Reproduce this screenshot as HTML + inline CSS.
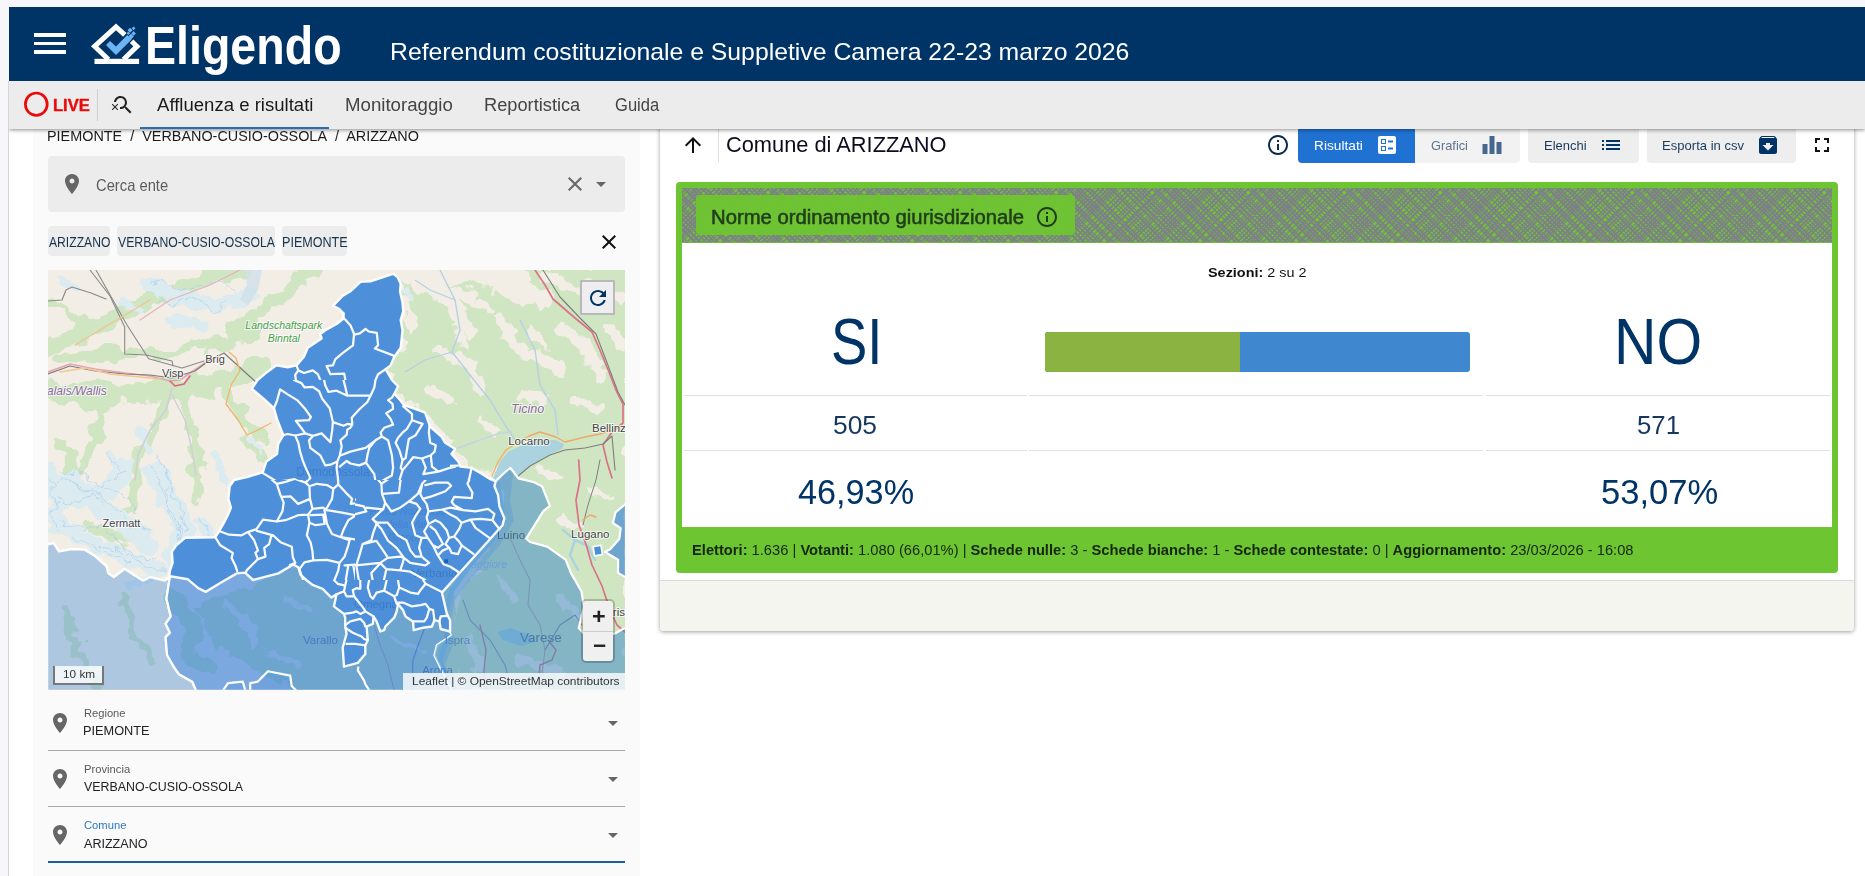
<!DOCTYPE html>
<html lang="it">
<head>
<meta charset="utf-8">
<title>Eligendo - Referendum costituzionale e Suppletive Camera 22-23 marzo 2026</title>
<style>
html,body{margin:0;padding:0;}
body{background:#f7f7f9;width:1865px;height:876px;overflow:hidden;font-family:"Liberation Sans",Arial,sans-serif;}
#root{position:absolute;left:0;top:0;width:1865px;height:876px;overflow:hidden;}
.abs{position:absolute;}
.t{position:absolute;white-space:nowrap;line-height:1em;transform-origin:0 0;display:inline-block;}
.t b{font-weight:700;}
#app{left:9px;top:7px;width:1856px;height:869px;background:#fff;}
#header{left:9px;top:7px;width:1856px;height:73.600px;background:#003366;}
#subnav{left:9px;top:80px;width:1856px;height:49px;background:#ececec;box-shadow:0 1px 4px rgba(0,0,0,.45);clip-path:inset(0 0 -10px 0);}
#leftpanel{left:33px;top:129px;width:607px;height:747px;background:#fafafa;}
#card{left:660px;top:120px;width:1194px;height:511px;background:#fff;box-shadow:0 1px 4px rgba(0,0,0,.38);border-radius:0 0 4px 4px;}
#cardfoot{left:660px;top:580px;width:1194px;height:51px;background:#f5f5f0;border-top:1px solid #dcdcdc;box-sizing:border-box;border-radius:0 0 4px 4px;}
.btn{position:absolute;top:120px;height:42.5px;background:#eeeeee;border-radius:0 0 4px 4px;}
svg{position:absolute;overflow:visible;}
</style>
</head>
<body>
<div id="root">
<div class="abs" id="app"></div>
<div class="abs" id="leftpanel"></div>
<div class="abs" style="left:8px;top:80.600px;width:1px;height:796px;background:#d4d4d6"></div>

<!-- right card -->
<div class="abs" id="card"></div>
<div class="abs" id="cardfoot"></div>

<!-- toolbar (under subnav shadow) -->
<svg style="left:681px;top:132.900px" width="24" height="24" viewBox="0 0 24 24"><path fill="#111" d="M4 12l1.41 1.41L11 7.83V20h2V7.83l5.58 5.59L20 12l-8-8-8 8z"/></svg>
<div class="abs" style="left:718px;top:129px;width:1px;height:33px;background:#dedede"></div>
<svg style="left:1265.8px;top:133px" width="24" height="24" viewBox="0 0 24 24"><path fill="#0b2b4d" d="M11 7h2v2h-2zm0 4h2v6h-2zm1-9C6.48 2 2 6.48 2 12s4.48 10 10 10 10-4.48 10-10S17.52 2 12 2zm0 18c-4.41 0-8-3.59-8-8s3.59-8 8-8 8 3.59 8 8-3.59 8-8 8z"/></svg>
<div class="btn" style="left:1298px;width:117px;background:#1f72d2;border-radius:0 0 0 4px"></div>
<div class="btn" style="left:1415px;width:105px;background:#f2f2f2;border-radius:0 0 4px 0"></div>
<div class="btn" style="left:1528px;width:111px;"></div>
<div class="btn" style="left:1647px;width:149px;"></div>
<!-- ballot icon -->
<svg style="left:1375px;top:133px" width="24" height="24" viewBox="0 0 24 24"><path fill="#fff" fill-rule="evenodd" d="M13 9.5h5v-2h-5v2zm0 7h5v-2h-5v2zm6 4.500H5c-1.100 0-2-.9-2-2V5c0-1.100.9-2 2-2h14c1.100 0 2 .9 2 2v14c0 1.100-.9 2-2 2zM6 11h5V6H6v5zm1-4h3v3H7V7zM6 18h5v-5H6v5zm1-4h3v3H7v-3z"/></svg>
<!-- bar chart icon -->
<svg style="left:1480px;top:133px" width="24" height="24" viewBox="0 0 24 24"><path fill="#46688f" d="M9.500 21h5V3h-5v18zM2.500 21h5V11h-5v10zM16.500 9v12h5V9h-5z"/></svg>
<!-- list icon -->
<svg style="left:1598.800px;top:133px" width="24" height="24" viewBox="0 0 24 24"><path fill="#003366" d="M3 13h2v-2H3v2zm0 4h2v-2H3v2zm0-8h2V7H3v2zm4 4h14v-2H7v2zm0 4h14v-2H7v2zM7 7v2h14V7H7z"/></svg>
<!-- archive icon -->
<svg style="left:1756.400px;top:133px" width="24" height="24" viewBox="0 0 24 24"><path fill="#003366" d="M20.540 5.230l-1.390-1.680C18.880 3.210 18.470 3 18 3H6c-.47 0-.88.210-1.160.55L3.460 5.230C3.170 5.570 3 6.020 3 6.500V19c0 1.100.9 2 2 2h14c1.100 0 2-.9 2-2V6.500c0-.48-.17-.93-.46-1.270zM12 17.500L6.500 12H10v-2h4v2h3.500L12 17.500zM5.120 5l.81-1h12l.94 1H5.120z"/></svg>
<!-- fullscreen icon -->
<svg style="left:1809.500px;top:133px" width="24" height="24" viewBox="0 0 24 24"><path fill="#111" d="M7 14H5v5h5v-2H7v-3zm-2-4h2V7h3V5H5v5zm12 7h-3v2h5v-5h-2v3zM14 5v2h3v3h2V5h-5z"/></svg>
<span class="t" id="crumb" style="left:47.07px;top:127.88px;font-size:15.5px;color:#1c1c1c;font-weight:400;transform:scaleX(0.9288);">PIEMONTE&nbsp; /&nbsp; VERBANO-CUSIO-OSSOLA&nbsp; /&nbsp; ARIZZANO</span>
<span class="t" id="comune" style="left:726.49px;top:134.50px;font-size:21.5px;color:#0c0c1e;font-weight:400;transform:scaleX(1.0142);">Comune di ARIZZANO</span>
<span class="t" id="b1" style="left:1313.68px;top:138.65px;font-size:13.4px;color:#fff;font-weight:400;transform:scaleX(1.0243);">Risultati</span>
<span class="t" id="b2" style="left:1431.00px;top:138.65px;font-size:13.4px;color:#5c7590;font-weight:400;transform:scaleX(0.9554);">Grafici</span>
<span class="t" id="b3" style="left:1543.63px;top:138.65px;font-size:13.4px;color:#17395e;font-weight:400;transform:scaleX(0.9686);">Elenchi</span>
<span class="t" id="b4" style="left:1662.02px;top:138.65px;font-size:13.4px;color:#17395e;font-weight:400;transform:scaleX(0.9759);">Esporta in csv</span>

<!-- header + subnav -->
<div class="abs" id="subnav"></div>
<div class="abs" id="header"></div>
<!-- hamburger -->
<div class="abs" style="left:34.300px;top:33px;width:31.500px;height:3.500px;background:#fff"></div>
<div class="abs" style="left:34.300px;top:41.600px;width:31.500px;height:3.500px;background:#fff"></div>
<div class="abs" style="left:34.300px;top:50.300px;width:31.500px;height:3.500px;background:#fff"></div>
<!-- logo -->
<svg style="left:88px;top:20px" width="56" height="48" viewBox="88 20 56 48">
  <path fill="none" stroke="#fff" stroke-width="5" stroke-linejoin="miter" d="M124.800 34.900 L116 26.900 L94.600 46.400 L108.500 59.500"/>
  <path fill="none" stroke="#fff" stroke-width="5" d="M131.600 41.200 L137 46.400 L123.500 59.500"/>
  <rect x="94.500" y="58.800" width="44.600" height="5.200" fill="#fff"/>
  <path fill="#6cb4f3" d="M106 45 L110 41 L116 46.600 L127.200 35 L131.600 39.400 L116 55 Z"/>
  <g fill="#6cb4f3">
   <rect x="-1.800" y="-1.800" width="3.600" height="3.600" transform="translate(130.100 30.200) rotate(45)"/>
   <rect x="-1.300" y="-1.300" width="2.600" height="2.600" transform="translate(133.600 28.300) rotate(45)"/>
   <rect x="-1.600" y="-1.600" width="3.200" height="3.200" transform="translate(133.600 33.500) rotate(45)"/>
   <rect x="-2" y="-2" width="4" height="4" transform="translate(131 36.600) rotate(45)"/>
   <rect x="-1.200" y="-1.200" width="2.400" height="2.400" transform="translate(128.300 33.200) rotate(45)"/>
  </g>
</svg>
<!-- live -->
<svg style="left:20px;top:88px" width="34" height="34" viewBox="20 88 34 34"><ellipse cx="36.300" cy="104.200" rx="10.900" ry="11.200" fill="none" stroke="#ea0a0a" stroke-width="2.700"/></svg>
<div class="abs" style="left:97px;top:89px;width:1px;height:32px;background:#cfcfcf"></div>
<!-- search_off -->
<svg style="left:110.500px;top:93px" width="24" height="24" viewBox="0 0 24 24"><path fill="#222" d="M15.500 14h-.79l-.28-.27C15.410 12.590 16 11.110 16 9.500 16 5.910 13.090 3 9.500 3 6.080 3 3.280 5.640 3.030 9h2.020C5.300 6.750 7.180 5 9.500 5 11.990 5 14 7.010 14 9.500S11.990 14 9.500 14c-.17 0-.33-.03-.5-.05v2.020c.17.020.33.030.5.030 1.610 0 3.090-.59 4.230-1.570l.27.280v.79l5 4.990L20.490 19l-4.990-5z M6.470 10.820L4 13.290l-2.470-2.470-.71.710L3.290 14 .82 16.470l.71.710L4 14.710l2.470 2.470.71-.71L4.710 14l2.470-2.470z"/></svg>
<div class="abs" style="left:140px;top:127px;width:189px;height:2px;background:#2a6db5"></div>

<!-- left panel content -->
<div class="abs" style="left:48px;top:156.250px;width:577px;height:55.500px;background:#ececec;border-radius:4px"></div>
<svg style="left:60px;top:172.300px" width="24" height="24" viewBox="0 0 24 24"><path fill="#666" d="M12 2C8.130 2 5 5.130 5 9c0 5.250 7 13 7 13s7-7.750 7-13c0-3.870-3.130-7-7-7zm0 9.500c-1.380 0-2.500-1.120-2.500-2.500s1.120-2.500 2.500-2.500 2.500 1.120 2.500 2.500-1.120 2.500-2.500 2.500z"/></svg>
<svg style="left:563px;top:171.900px" width="24" height="24" viewBox="0 0 24 24"><path fill="#666" d="M19 6.410L17.590 5 12 10.590 6.410 5 5 6.410 10.590 12 5 17.590 6.410 19 12 13.410 17.590 19 19 17.590 13.410 12z"/></svg>
<svg style="left:589px;top:172px" width="24" height="24" viewBox="0 0 24 24"><path fill="#666" d="M7 10l5 5 5-5z"/></svg>
<div class="abs" style="left:48px;top:226.250px;width:62px;height:29.500px;background:#ececec;border-radius:4px"></div>
<div class="abs" style="left:117px;top:226.250px;width:158px;height:29.500px;background:#ececec;border-radius:4px"></div>
<div class="abs" style="left:282px;top:226.250px;width:65px;height:29.500px;background:#ececec;border-radius:4px"></div>
<svg style="left:596.500px;top:230.200px" width="24" height="24" viewBox="0 0 24 24"><path fill="#111" d="M19 6.410L17.590 5 12 10.590 6.410 5 5 6.410 10.590 12 5 17.590 6.410 19 12 13.410 17.590 19 19 17.590 13.410 12z"/></svg>

<!-- map -->
<div class="abs" id="map" style="left:48px;top:270px;width:577px;height:419.700px;overflow:hidden;background:#f2efe9">
<svg style="left:0;top:0" width="577" height="419.7" viewBox="48 270 577 419.7">
<defs>
<filter id="rag" x="-5%" y="-5%" width="110%" height="110%"><feTurbulence type="fractalNoise" baseFrequency="0.045" numOctaves="3" seed="7" result="n"/><feDisplacementMap in="SourceGraphic" in2="n" scale="26" xChannelSelector="R" yChannelSelector="G"/><feGaussianBlur stdDeviation="0.7"/></filter>
<filter id="rag2" x="-5%" y="-5%" width="110%" height="110%"><feTurbulence type="fractalNoise" baseFrequency="0.09" numOctaves="2" seed="3" result="n"/><feDisplacementMap in="SourceGraphic" in2="n" scale="14" xChannelSelector="G" yChannelSelector="R"/><feGaussianBlur stdDeviation="0.5"/></filter>
<filter id="soft"><feGaussianBlur stdDeviation="1.2"/></filter>
<clipPath id="cm"><rect x="48" y="270" width="577" height="419.7"/></clipPath>
</defs>
<g clip-path="url(#cm)">
<rect x="48" y="270" width="577" height="420" fill="#f2eee6"/>
<g filter="url(#rag)" fill="#d0e5c1" stroke="#d0e5c1" stroke-linejoin="round" stroke-linecap="round">
<path d="M405 270 L625 270 L625 480 L520 480 L500 470 L470 462 L455 445 L440 430 L428 410 L405 400 L398 385 L395 370 L405 345 Z" stroke-width="6"/>
<path d="M520 470 L625 470 L625 640 L590 640 L580 600 L565 560 L545 545 L528 538 L545 512 L550 495 Z" stroke-width="4"/>
<path d="M500 480 L560 480 L600 560 L625 600 L625 690 L470 690 L455 660 L452 630 L460 600 L480 570 L505 530 Z" stroke-width="6"/>
<path d="M250 585 L300 570 L340 600 L345 690 L300 690 L250 660 L215 640 L200 610 Z" stroke-width="6"/>
<path d="M345 600 L450 590 L450 690 L345 690 Z" stroke-width="6"/>
<path fill="none" stroke-width="14" d="M175 600 L195 625 L190 650 L210 670"/>
<path fill="none" stroke-width="10" d="M60 610 L80 640 L85 670 L100 690"/>
<path fill="none" stroke-width="9" d="M120 600 L135 630 L150 660"/>
<path fill="none" stroke-width="16" d="M40 352 L100 325 L150 300 L200 280 L240 268"/>
<path fill="none" stroke-width="12" d="M230 330 L275 300 L320 272"/>
<path fill="none" stroke-width="20" d="M40 392 L90 396 L140 392 L190 388 L235 378 L262 366"/>
<path fill="none" stroke-width="12" d="M60 360 L120 352 L170 352 L215 345 L250 330"/>
<path fill="none" stroke-width="11" d="M172 385 L160 420 L140 450 L135 480 L130 510"/>
<path fill="none" stroke-width="10" d="M185 390 L192 430 L196 470 L200 500"/>
<path fill="none" stroke-width="10" d="M100 400 L95 440 L80 470 L70 500"/>
<path fill="none" stroke-width="10" d="M222 380 L235 410 L250 430 L268 442"/>
<path fill="none" stroke-width="9" d="M60 440 L70 470 L75 500"/>
<path fill="none" stroke-width="12" d="M95 530 L115 535 L128 540"/>
<path fill="none" stroke-width="8" d="M48 300 L70 310 L90 330"/>
<path fill="none" stroke-width="9" d="M245 440 L262 455 L268 470"/>
</g>
<g filter="url(#rag2)" fill="#f2eee6" stroke="#f2eee6" stroke-linecap="round" stroke-linejoin="round">
<path fill="none" stroke-width="14" d="M420 285 L450 300 L470 330"/>
<path fill="none" stroke-width="20" d="M405 272 L440 276 L480 272 L520 278"/>
<path fill="none" stroke-width="12" d="M440 290 L470 296"/>
<path fill="none" stroke-width="10" d="M500 292 L530 300"/>
<path fill="none" stroke-width="8" d="M455 325 L465 345"/>
<path fill="none" stroke-width="16" d="M470 275 L520 285 L545 300"/>
<path fill="none" stroke-width="13" d="M500 320 L520 350 L560 370"/>
<path fill="none" stroke-width="10" d="M440 350 L470 365 L480 390"/>
<path fill="none" stroke-width="12" d="M560 330 L585 345 L600 375"/>
<path fill="none" stroke-width="8" d="M430 390 L450 400"/>
<path fill="none" stroke-width="8" d="M520 395 L545 400"/>
<path fill="none" stroke-width="12" d="M590 285 L620 300"/>
<path fill="none" stroke-width="8" d="M575 400 L600 410"/>
<path fill="none" stroke-width="9" d="M610 330 L625 350"/>
<path fill="none" stroke-width="6" d="M480 420 L495 432"/>
<path fill="none" stroke-width="8" d="M405 300 L412 330"/>
<path fill="none" stroke-width="8" d="M545 275 L575 290"/>
<path fill="none" stroke-width="7" d="M470 300 L490 310"/>
<path fill="none" stroke-width="7" d="M530 330 L545 345"/>
<path fill="none" stroke-width="7" d="M540 470 L560 478"/>
<path fill="none" stroke-width="10" d="M470 640 L480 670"/>
<path fill="none" stroke-width="9" d="M225 605 L250 625 L255 645"/>
<path fill="none" stroke-width="7" d="M285 600 L310 610"/>
<path fill="none" stroke-width="7" d="M270 655 L300 665"/>
<path fill="none" stroke-width="6" d="M395 640 L420 650"/>
<path fill="none" stroke-width="10" d="M520 660 L560 672"/>
<path fill="none" stroke-width="8" d="M560 600 L580 615"/>
<path fill="none" stroke-width="7" d="M500 580 L515 600"/>
<path fill="none" stroke-width="6" d="M590 490 L610 498"/>
<path fill="none" stroke-width="6" d="M560 520 L580 528"/>
</g>
<g filter="url(#rag2)" fill="none" stroke="#dcebf0" stroke-linecap="round" stroke-linejoin="round">
<path stroke-width="16" d="M150 285 L185 300 L220 305 L250 295"/>
<path stroke-width="10" d="M170 320 L205 325"/>
<path stroke-width="18" d="M55 490 L80 500 L110 490 L125 470"/>
<path stroke-width="16" d="M60 525 L95 545 L130 560 L160 570"/>
<path stroke-width="22" d="M155 470 L170 500 L185 530 L175 555"/>
<path stroke-width="20" d="M70 480 L95 500 L120 520 L150 545"/>
<path stroke-width="14" d="M50 470 L60 500 L52 530"/>
<path stroke-width="8" d="M140 430 L150 450"/>
<path stroke-width="10" d="M200 520 L210 535"/>
<path stroke-width="9" d="M110 455 L122 470"/>
<path stroke-width="8" d="M215 455 L225 480"/>
<path stroke-width="8" d="M130 585 L160 575"/>
<path stroke-width="7" d="M120 300 L140 310"/>
<path stroke-width="8" d="M60 280 L80 290"/>
<path stroke-width="6" d="M250 440 L262 452"/>
<path stroke-width="6" d="M405 290 L412 300"/>
</g>
<g fill="none" stroke="#aacdf0" stroke-width="0.8" opacity=".85" filter="url(#rag2)">
<path d="M150 285 q10 -8 20 0 t20 4 t20 -6 t25 8"/>
<path d="M160 300 q12 8 24 0 t22 6 t20 -4"/>
<path d="M55 485 q10 -10 20 0 t18 6 t20 -12 t14 -10"/>
<path d="M58 500 q14 6 26 -2 t22 8"/>
<path d="M60 520 q15 10 30 8 t30 16 t36 14"/>
<path d="M150 465 q10 12 14 28 t14 30 t-8 30"/>
<path d="M165 470 q8 16 12 30 t8 30"/>
<path d="M70 535 q14 6 28 14 t30 12"/>
<path d="M60 470 q8 6 16 2 t14 8"/>
<path d="M175 520 q6 10 2 22"/>
<path d="M70 480 q12 10 26 14 t24 18 t28 20"/>
<path d="M80 470 q10 14 30 20 t26 22"/>
<path d="M50 480 q8 14 4 30 t6 22"/>
<path d="M158 455 q12 18 10 40 t10 36"/>
<path d="M100 545 q20 4 36 16 t30 10"/>
<path d="M195 515 q10 8 14 20"/>
<path d="M105 455 q10 8 16 16"/>
</g>
<path fill="#aad3df" d="M493 478 L500 462 L508 452 L520 446 L535 440 L555 440 L564 444 L562 449 L548 455 L532 465 L517 477 L509 468 L497 482 Z"/>
<path fill="none" stroke="#aad3df" stroke-width="5" d="M497 482 L500 500 L503 520 L492 540 L470 565 L452 590 L445 615 L447 640 L440 660 L450 690"/>
<path fill="none" stroke="#aad3df" stroke-width="2.5" stroke-linecap="round" d="M563 530 L575 540 L588 546 L595 560 M575 540 L570 555 L578 570"/>
<path fill="#aad3df" d="M497 632 l14 -4 l16 6 l8 8 l-14 4 l-18 -6 z"/>
<path fill="none" stroke="#b5d0e6" stroke-width="1.4" d="M440 270 L455 300 L460 330 L452 352 L470 375 L490 400 L505 425 L515 440"/>
<path fill="none" stroke="#b5d0e6" stroke-width="1.4" d="M520 320 L535 350 L540 385 L555 410 L558 435"/>
<path fill="none" stroke="#b5d0e6" stroke-width="1.2" d="M455 300 L430 290 L415 280 M452 352 L425 360 L405 372"/>
<path fill="none" stroke="#c5d5e0" stroke-width="1.6" d="M455 449 L480 440 L500 433 L512 432"/>
<path fill="#cfe0ea" stroke="none" d="M245 270 L262 270 L258 290 L248 305 L240 300 L247 285 Z" opacity=".8"/>
<g fill="none" stroke-linecap="round" stroke-linejoin="round">
<path stroke="#8a8a8a" stroke-width="1.2" d="M48 301 L62 300 L66 290 L72 287 L91 293 L106 299"/>
<path stroke="#8a8a8a" stroke-width="1.1" d="M90 270 L110 296 L124.700 327 L124.700 354 L146 355 L172 361 L173 366"/>
<path stroke="#8a8a8a" stroke-width="1.1" d="M96 270 L127 325 L148.700 358.700 L182 368 L204 361"/>
<path stroke="#e6a6b0" stroke-width="1.7" d="M48 372 L70 364 L95 369 L125 373 L150 376 L170 381 L180 380 L193 371 L205 363"/>
<path stroke="#7d7d7d" stroke-width="1.2" d="M48 374 L70 366 L95 371 L125 374 L150 375 L172 378 L195 371 L210 360 L224 353 L257 383 L275 398"/>
<path stroke="#d9667d" stroke-width="1.6" d="M170 381 L175 386 L184 384 L190 376"/>
<path stroke="#f3c78e" stroke-width="1.5" d="M60 372 L85 368 L110 374 L160 379"/>
<path stroke="#f0b56a" stroke-width="1.3" d="M229 352 L236 358 L240 371 L231 385 L226 404 L238 420 L247 435 L258 430 L271 423"/>
<path stroke="#cfcfd6" stroke-width="1.6" d="M172 388 L166 410 L150 430 L138 455 L135 480"/>
<path stroke="#cfcfd6" stroke-width="1.4" d="M172 395 L185 420 L192 450 L196 475"/>
<path stroke="#e5b3c0" stroke-width="1.3" d="M140 320 L170 300 L210 285 L240 270"/>
<path stroke="#efc48f" stroke-width="1.3" d="M75 345 L100 330 L130 312 L150 300"/>
<path stroke="#dc7288" stroke-width="1.700" d="M535 270 L545 285 L553 299 L575 318 L592 332 L600 350 L608.600 371 L616 390 L623 404 L623 423 L612 432 L603 445 L607 462 L612 478"/>
<path stroke="#7d7d7d" stroke-width="1.1" d="M543 270 L560 297 L580 318 L596 334 L606 360 L618 392 L625 405"/>
<path stroke="#7d7d7d" stroke-width="1.1" d="M517 477 L530 466 L550 455 L565 450 L585 448 L603 444 L612 436 L615 470"/>
<path stroke="#f0a868" stroke-width="1.4" d="M529 436 L540 432 L556 437 L565 442 L585 437 L600 434 L620 428"/>
<path stroke="#f0b56a" stroke-width="1.4" d="M492 476 L498 462 L506 450 L520 441 L529 436"/>
<path stroke="#dc7288" stroke-width="1.700" d="M578.700 460 L580 480 L576 500 L579 525 L586.600 546 L592 565 L602 586 L610 610 L617 625 L625 632"/>
<path stroke="#7d7d7d" stroke-width="1" d="M600 460 L596 480 L588 505 L583 525"/>
<path stroke="#f0a868" stroke-width="1.400" d="M583 520 L590 515 L596 517"/>
<path stroke="#c8a8a0" stroke-width="1.1" d="M511 540 L520 560 L530 580 L528 605 L540 625 L545 650 L540 690"/>
<path stroke="#9a9ab0" stroke-width="1.1" d="M463 600 L470 620 L490 640 L505 665 L512 690"/>
<path stroke="#d07a90" stroke-width="1.3" d="M480 625 L486 650 L484 670 L486 690"/>
<path stroke="#8c8cab" stroke-width="1.1" d="M545 650 L560 625 L575 615 L582 625"/>
<path stroke="#d07a90" stroke-width="1.4" d="M538 690 L540 665 L552 660 L556 650 L548 640"/>
<path stroke="#8f86c0" stroke-width="1.2" d="M428 620 L420 640 L413 660 L412 690"/>
<path stroke="#c9a0a8" stroke-width="1" d="M374 625 L380 645 L388 665 L394 690"/>
</g>
<g font-family="Liberation Sans, Arial, sans-serif">
<text x="283.8" y="329" text-anchor="middle" fill="#46a04a" opacity="1" font-weight="400" style="font-size:10.5px;font-style:italic;" stroke="#fff" stroke-width="2" stroke-opacity=".7" paint-order="stroke">Landschaftspark</text>
<text x="283.8" y="342" text-anchor="middle" fill="#46a04a" opacity="1" font-weight="400" style="font-size:10.5px;font-style:italic;" stroke="#fff" stroke-width="2" stroke-opacity=".7" paint-order="stroke">Binntal</text>
<text x="215" y="363" text-anchor="middle" fill="#444" opacity="1" font-weight="400" style="font-size:11px;" stroke="#fff" stroke-width="2" stroke-opacity=".7" paint-order="stroke">Brig</text>
<text x="172.7" y="377" text-anchor="middle" fill="#444" opacity="1" font-weight="400" style="font-size:11px;" stroke="#fff" stroke-width="2" stroke-opacity=".7" paint-order="stroke">Visp</text>
<text x="47" y="395.5" text-anchor="start" fill="#8b6a9c" opacity="1" font-weight="400" style="font-size:12px;font-style:italic;" stroke="#fff" stroke-width="2" stroke-opacity=".7" paint-order="stroke">alais/Wallis</text>
<text x="121.5" y="527.5" text-anchor="middle" fill="#444" opacity="1" font-weight="400" style="font-size:11px;" stroke="#fff" stroke-width="2" stroke-opacity=".7" paint-order="stroke">Zermatt</text>
<text x="527.5" y="413" text-anchor="middle" fill="#8b6a9c" opacity="1" font-weight="400" style="font-size:12.5px;font-style:italic;" stroke="#fff" stroke-width="2" stroke-opacity=".7" paint-order="stroke">Ticino</text>
<text x="529" y="445" text-anchor="middle" fill="#444" opacity="1" font-weight="400" style="font-size:11.5px;" stroke="#fff" stroke-width="2" stroke-opacity=".7" paint-order="stroke">Locarno</text>
<text x="592" y="432" text-anchor="start" fill="#444" opacity="1" font-weight="400" style="font-size:11.5px;" stroke="#fff" stroke-width="2" stroke-opacity=".7" paint-order="stroke">Bellinzona</text>
<text x="590.3" y="538" text-anchor="middle" fill="#444" opacity="1" font-weight="400" style="font-size:11.5px;" stroke="#fff" stroke-width="2" stroke-opacity=".7" paint-order="stroke">Lugano</text>
<text x="609" y="616.5" text-anchor="middle" fill="#444" opacity="1" font-weight="400" style="font-size:11.5px;" stroke="#fff" stroke-width="2" stroke-opacity=".7" paint-order="stroke">Mendrisio</text>
</g>
<path d="M47.0 544.5 L53.5 543.2 L59.0 551.4 L72.0 549.0 L84.5 549.6 L95.0 556.0 L106.4 566.0 L108.3 573.3 L113.8 577.0 L124.7 568.8 L134.0 575.0 L143.0 580.6 L150.3 577.0 L164.9 580.6 L170.0 576.3 L166.4 598.6 L170.8 616.4 L165.6 623.8 L170.0 632.7 L165.6 637.2 L167.1 655.0 L173.8 666.8 L179.0 674.2 L192.3 681.7 L196.8 692.0 L47.0 692.0 Z" fill="#2b7ad8" fill-opacity=".34" stroke="#fff" stroke-width="2.400" stroke-linejoin="round"/>
<path d="M170.0 576.3 L166.4 598.6 L170.8 616.4 L165.6 623.8 L170.0 632.7 L165.6 637.2 L167.1 655.0 L173.8 666.8 L179.0 674.2 L192.3 681.7 L196.8 692.0 L452.5 692.0 L452.5 690.0 L450.7 686.7 L440.7 667.9 L434.4 655.3 L436.9 645.3 L452.0 635.2 L450.1 631.5 L450.1 620.2 L446.9 613.9 L441.9 592.6 L453.2 580.0 L300.0 560.0 L170.0 570.0 Z" fill="#2b7ad8" fill-opacity=".60"/>
<path d="M450.1 631.5 L452.0 635.2 L436.9 645.3 L434.4 655.3 L440.7 667.9 L450.7 686.7 L452.5 690.0" fill="none" stroke="#fff" stroke-width="2.2" stroke-linejoin="round"/>
<path d="M170.0 576.3 L166.4 598.6 L170.8 616.4 L165.6 623.8 L170.0 632.7 L165.6 637.2 L167.1 655.0 L173.8 666.8 L179.0 674.2 L192.3 681.7 L196.8 692.0" fill="none" stroke="#fff" stroke-width="2.2" stroke-linejoin="round"/>
<path d="M495.6 481.3 L503.0 474.0 L510.5 467.9 L518.4 478.4 L534.0 482.3 L542.0 486.2 L549.9 505.9 L543.3 511.2 L526.2 538.7 L530.0 542.0 L547.2 546.6 L565.6 559.7 L570.9 572.9 L581.4 591.2 L584.0 607.0 L578.7 628.0 L590.0 640.0 L605.0 636.0 L615.5 633.2 L624.7 628.0 L626.0 692.0 L452.5 692.0 L452.5 690.0 L450.7 686.7 L440.7 667.9 L434.4 655.3 L436.9 645.3 L452.0 635.2 L450.1 631.5 L450.1 620.2 L446.9 613.9 L441.9 592.6 L453.2 580.0 L502.5 525.2 L504.4 518.3 L499.4 506.4 L498.1 495.1 L494.4 486.3 Z" fill="#2d7fc8" fill-opacity=".47"/>
<path d="M495.6 481.3 L503.0 474.0 L510.5 467.9 L518.4 478.4 L534.0 482.3 L542.0 486.2 L549.9 505.9 L543.3 511.2 L526.2 538.7 L530.0 542.0 L547.2 546.6 L565.6 559.7 L570.9 572.9 L581.4 591.2 L584.0 607.0 L578.7 628.0 L590.0 640.0 L605.0 636.0 L615.5 633.2 L624.7 628.0" fill="none" stroke="#fff" stroke-width="2.2" stroke-linejoin="round"/>
<path d="M497 483 L509 469 L513 476 L510 500 L514 520 L500 545 L470 580 L455 600 L450 625 L455 640 L445 665 L455 690 L452 690 L436 655 L438 645 L452 635 L450 620 L442 592 L453 580 L502.500 525 L504 518 L499 506 L498 495 Z" fill="#4a90e0" fill-opacity=".28"/>
<path d="M626.0 503.5 L615.5 512.5 L612.9 523.0 L620.7 528.2 L619.4 538.7 L610.2 549.2 L605.0 551.9 L618.1 559.7 L618.1 572.9 L626.0 577.5 Z" fill="#2b7ad8" fill-opacity=".6" stroke="#fff" stroke-width="2.2" stroke-linejoin="round"/>
<path d="M593.200 546.600 L601 545.300 L602.400 554.500 L594.500 555.800 Z" fill="#2b7ad8" fill-opacity=".8" stroke="#fff" stroke-width="1.600"/>
<path d="M222 692 L228 683.200 L242.800 681.700 L245.700 692 M250.200 692 L250.200 683.200 L257.600 681.700 L268 671.300 L290.200 675.700 L291.700 686 L297.700 692" fill="#2b7ad8" fill-opacity=".12" stroke="#fff" stroke-width="2.2" stroke-linejoin="round"/>
<path d="M358.400 666.600 L357.800 670.400 L364 680.400 L365.300 684.200 L370.400 692" fill="none" stroke="#fff" stroke-width="2.2" stroke-linejoin="round"/>
<g font-family="Liberation Sans, Arial, sans-serif">
<text x="511" y="539.5" text-anchor="middle" fill="#3e5f7a" opacity="0.9" font-weight="400" style="font-size:11.5px;">Luino</text>
<text x="541" y="642.5" text-anchor="middle" fill="#4577a6" opacity="0.95" font-weight="400" style="font-size:13.5px;">Varese</text>
<text x="320.5" y="644.5" text-anchor="middle" fill="#3f74c2" opacity="0.9" font-weight="400" style="font-size:11.5px;">Varallo</text>
<text x="457.5" y="644.5" text-anchor="middle" fill="#4f80b5" opacity="0.9" font-weight="400" style="font-size:11.5px;">Ispra</text>
<text x="437.5" y="674.5" text-anchor="middle" fill="#3f76bd" opacity="0.9" font-weight="400" style="font-size:11.5px;">Arona</text>
<text x="484.5" y="568" text-anchor="middle" fill="#6a9fd8" opacity="0.95" font-weight="400" style="font-size:11px;font-style:italic;">Maggiore</text>
</g>
<path d="M393.1 273.8 L397.5 276.9 L400.7 283.8 L400.0 291.3 L402.5 302.6 L403.2 311.4 L400.7 320.2 L402.5 330.3 L400.7 347.8 L394.4 356.6 L390.6 365.4 L385.6 369.2 L391.9 380.0 L398.1 386.3 L394.4 393.8 L400.7 400.7 L403.8 405.1 L415.0 408.9 L425.1 412.6 L430.1 426.5 L441.4 436.5 L445.2 442.8 L455.2 449.0 L451.5 454.0 L458.4 461.6 L460.3 466.6 L471.6 467.9 L480.4 472.9 L490.4 479.2 L495.6 481.3 L494.4 486.3 L498.1 495.1 L499.4 506.4 L504.4 518.3 L502.5 525.2 L453.2 580.0 L441.9 592.6 L446.9 613.9 L450.1 620.2 L450.1 631.5 L440.7 629.0 L439.4 621.4 L434.4 620.2 L431.9 626.5 L423.1 627.7 L413.7 630.2 L413.0 621.4 L405.5 616.4 L403.0 610.1 L398.0 603.9 L396.7 611.4 L394.2 617.7 L385.4 626.5 L384.2 630.2 L380.4 631.5 L376.6 621.4 L373.5 616.4 L372.9 623.9 L366.6 626.5 L367.8 640.3 L365.3 645.3 L365.3 654.1 L357.8 662.9 L344.0 666.6 L342.7 647.8 L346.5 634.0 L345.2 625.2 L345.2 617.7 L344.0 613.9 L333.9 606.4 L336.5 594.4 L331.4 597.6 L322.6 588.8 L312.6 585.0 L306.3 580.0 L300.6 574.8 L298.4 567.4 L293.2 564.5 L278.4 573.4 L253.1 580.0 L245.0 572.6 L236.8 573.4 L219.0 583.7 L205.7 591.9 L198.2 588.2 L187.9 579.3 L170.0 576.3 L169.4 575.0 L170.0 570.4 L172.6 562.9 L171.9 551.6 L176.3 545.3 L185.1 537.8 L215.2 537.2 L219.0 531.5 L224.0 522.7 L227.8 515.2 L230.9 507.7 L228.4 498.9 L229.7 486.3 L234.1 480.0 L247.9 476.9 L261.7 472.5 L262.6 472.9 L266.3 461.6 L277.0 454.1 L278.2 444.0 L283.3 435.2 L277.0 418.9 L273.9 408.2 L263.8 398.8 L251.9 388.8 L257.5 380.0 L267.6 371.7 L276.4 365.4 L287.7 367.3 L296.5 365.4 L304.0 356.6 L307.8 347.8 L315.3 342.8 L321.6 338.4 L320.3 334.0 L325.3 330.3 L336.6 324.0 L342.9 319.0 L343.5 313.3 L339.1 308.9 L332.9 305.8 L342.9 295.7 L350.4 291.3 L360.5 281.9 L370.5 281.3 L381.8 277.5 Z" fill="#4e8fd9"/>
<g font-family="Liberation Sans, Arial, sans-serif">
<text x="333" y="476" text-anchor="middle" fill="#2f72c8" opacity="0.6" font-weight="400" style="font-size:12px;">Domodossola</text>
<text x="434.5" y="577" text-anchor="middle" fill="#2c6cc0" opacity="0.6" font-weight="400" style="font-size:11.5px;">Verbania</text>
<text x="376" y="608.5" text-anchor="middle" fill="#2c6cc0" opacity="0.6" font-weight="400" style="font-size:11.5px;">Omegna</text>
<text x="408" y="515" text-anchor="middle" fill="#3478cf" opacity="0.5" font-weight="400" style="font-size:10.5px;font-style:italic;">Parco Nazionale</text>
<text x="406" y="528.5" text-anchor="middle" fill="#3478cf" opacity="0.5" font-weight="400" style="font-size:10.5px;font-style:italic;">della Val</text>
<text x="405.5" y="541.5" text-anchor="middle" fill="#3478cf" opacity="0.5" font-weight="400" style="font-size:10.5px;font-style:italic;">Grande</text>
</g>
<rect x="444.300" y="559.300" width="3.800" height="3.800" fill="#1463c4"/>
<g fill="none" stroke="#fff" stroke-opacity=".96" stroke-width="2.250" stroke-linejoin="round" stroke-linecap="round">
<clipPath id="tc0"><rect x="250" y="270" width="200" height="110"/></clipPath>
<path clip-path="url(#tc0)" d="M343.5 313.3 L343.5 317.7 L350.4 325.2 L353.6 332.8 L354.2 334.7 L359.9 333.4 L365.5 329.0 L368.6 331.5 L376.8 332.8 L378.1 345.3 L374.9 348.5 L393.1 355.4 L394.4 356.6M354.0 334.7 L353.0 345.3 L342.9 352.9 L335.4 359.1 L332.9 365.4 L326.6 366.0 L330.4 374.2 L344.2 373.6 L345.4 380.0M296.5 365.4 L298.3 370.4 L295.2 374.8 L295.8 380.0M298.3 370.4 L304.0 373.0 L312.8 370.4 L317.8 374.2 L320.3 380.0M385.6 369.2 L378.1 374.2 L375.5 380.0"/>
<clipPath id="tc1"><rect x="250" y="380" width="200" height="100"/></clipPath>
<path clip-path="url(#tc1)" d="M293.9 380.0 L301.5 383.1 L304.6 387.5 L312.8 386.9 L319.1 391.3 L322.2 398.8 L329.7 408.2 L332.9 422.1 L343.5 425.8 L347.3 423.9 L352.3 424.6M324.1 380.0 L325.3 385.6 L328.5 391.9 L336.6 390.7 L347.3 395.7 L370.5 395.7 L374.3 387.5 L375.5 380.0M343.5 380.0 L345.4 387.5 L347.3 395.7M370.5 395.7 L367.4 402.0 L359.2 409.5 L351.7 417.7 L352.3 424.6 L350.4 427.7 L347.3 429.6 L346.7 434.6 L340.4 440.3 L341.7 446.5 L339.8 455.3 L337.3 461.6 L336.6 467.9 L337.9 477.9 L338.5 490.0M273.9 408.2 L277.0 400.7 L280.1 389.4 L287.7 394.4 L297.1 400.1 L304.6 408.2 L310.9 417.0 L309.0 420.2 L295.8 420.8 L302.1 429.0 L305.2 433.4 L312.8 435.9 L321.6 433.4 L330.4 442.1 L332.2 430.2 L332.9 422.1M283.3 435.2 L287.7 434.0 L295.2 435.5 L305.2 433.4M295.2 435.5 L298.3 442.8 L300.2 452.2 L302.7 460.4 L305.2 466.6 L310.3 477.9 L305.2 484.2M312.8 436.2 L309.0 440.3 L310.3 447.8 L320.3 455.3 L325.3 465.4 L330.4 464.7 L337.3 461.6M262.6 472.9 L277.0 481.7 L287.7 480.4 L294.6 479.2 L305.2 484.2 L309.0 490.0M277.0 481.7 L279.5 490.0M394.4 393.8 L391.9 397.6 L388.1 400.1 L392.5 403.9 L393.1 408.9 L386.2 413.3 L390.6 418.9 L393.1 424.6 L384.3 427.7 L380.6 432.7 L381.8 436.5 L375.5 440.3 L365.5 447.8 L350.4 451.6 L341.0 455.3M381.8 436.5 L388.1 440.3 L391.9 455.3 L393.1 467.9 L391.9 475.4 L380.6 481.7 L383.1 490.0M375.5 440.3 L369.3 447.8 L367.4 455.3 L366.1 462.9 L374.3 474.2 L375.5 481.7 L380.6 481.7M366.1 462.6 L359.2 465.4 L350.4 463.5 L346.7 461.0 L339.8 466.6M403.2 406.4 L412.0 413.9 L412.0 420.2 L406.9 429.0 L402.5 432.7 L398.1 437.8 L395.6 442.8 L399.4 450.3 L402.5 460.4 L400.7 467.9 L402.5 470.4 L399.4 480.4 L398.8 490.0M412.0 420.2 L422.6 423.9 L415.7 435.2 L408.8 439.0 L406.9 450.3 L405.7 457.8 L402.5 460.4M429.5 425.2 L428.9 432.7 L430.2 442.8 L435.8 445.3 L434.6 451.6 L430.8 455.3 L432.0 466.6 L438.3 471.7 L450.0 467.9M430.8 455.3 L422.0 458.5 L413.2 457.2 L405.7 466.6 L402.5 470.4M422.0 458.5 L425.8 467.9 L423.3 474.2 L438.3 471.7M450.0 483.0 L425.8 485.5 L420.7 490.0M311.5 490.0 L315.3 484.2 L325.3 483.0 L332.9 488.0 L334.1 490.0"/>
<clipPath id="tc2"><rect x="450" y="380" width="150" height="100"/></clipPath>
<path clip-path="url(#tc2)" d="M431.4 466.6 L443.9 466.1 L457.8 465.6M471.6 467.9 L469.1 479.2 L466.5 484.2 L470.3 490.0M421.3 490.0 L428.9 483.0 L447.7 482.3 L451.5 484.2 L447.7 490.0M400.0 488.0 L421.3 477.9 L437.7 472.3M450.0 467.9 L455.2 466.6"/>
<clipPath id="tc3"><rect x="160" y="480" width="195" height="100"/></clipPath>
<path clip-path="url(#tc3)" d="M261.7 472.5 L269.2 477.5 L276.8 483.8 L280.5 495.1 L283.7 502.6 L282.4 511.4 L276.8 521.5 L263.0 519.6 L256.7 529.0 L247.9 532.1 L241.6 535.3 L229.1 534.7 L220.3 531.5M276.8 483.8 L285.5 481.9 L295.0 478.8 L305.6 482.6 L310.7 477.5 L316.9 470.0M305.6 482.6 L309.4 486.3 L310.0 498.9 L298.1 503.9 L290.6 496.4 L281.8 497.0M310.0 498.9 L312.5 508.9 L308.1 514.6 L298.1 515.2 L285.5 520.2 L276.8 521.5M312.5 508.9 L323.2 507.7 L327.0 510.2M309.4 486.3 L316.9 483.8 L327.0 485.1 L333.3 488.8 L338.3 484.4 L337.7 470.0M333.3 488.8 L332.0 498.9 L327.0 507.7 L324.5 510.2M338.3 484.4 L345.8 492.6 L352.1 498.9 L350.8 503.9 L360.0 502.6M327.0 510.2 L342.0 512.7 L355.9 515.2 L360.0 512.7M355.9 515.2 L348.3 520.2 L343.3 530.3 L340.8 537.2M324.5 510.2 L327.0 524.0 L332.0 534.0 L340.8 537.2 L360.0 540.3M308.1 514.6 L309.4 522.7 L306.9 535.3 L310.7 542.8 L312.5 551.6 L313.2 560.4 L304.4 562.3 L299.4 569.2 L303.1 580.0M309.4 522.7 L315.7 525.2 L324.5 524.0M310.7 515.2 L323.2 514.6 L324.5 523.4M313.2 560.4 L327.0 559.8 L339.5 562.9 L344.6 556.6 L348.3 545.3 L349.6 540.3 L342.0 537.8M339.5 562.9 L338.3 570.4 L334.5 580.0M344.6 565.4 L360.0 564.2M348.3 565.4 L345.8 580.0M353.3 565.4 L355.9 580.0M215.2 537.2 L220.3 545.3 L232.8 552.9 L231.6 557.9 L235.3 565.4 L237.2 571.1M247.9 532.1 L254.2 540.3 L257.9 550.4 L255.4 552.9 L257.9 559.1 L246.6 570.4 L246.0 572.3M257.9 559.1 L265.5 556.6 L264.2 547.8 L269.2 544.1 L271.1 536.5 L273.0 535.3 L256.7 530.9M273.0 535.3 L280.5 542.2 L291.8 546.8 L292.8 557.3 L295.3 562.9 L289.9 565.0"/>
<clipPath id="tc4"><rect x="355" y="480" width="195" height="100"/></clipPath>
<path clip-path="url(#tc4)" d="M373.2 470.0 L376.4 477.5 L381.4 483.8 L382.0 493.9 L385.2 502.6 L383.3 508.9 L372.6 519.0 L377.0 522.7 L373.2 532.8 L371.3 540.3 L362.6 544.1 L359.4 555.4 L356.3 565.4 L350.0 564.2M350.0 497.0 L355.0 499.5 L352.5 503.9 L363.8 506.4 L366.3 511.4 L356.3 513.9 L350.0 516.5M366.3 507.7 L383.3 509.5M391.4 470.0 L390.8 477.5 L381.4 483.8M402.1 470.0 L400.2 482.6 L399.0 492.6 L382.0 493.9M385.2 502.6 L391.4 511.4 L400.2 507.7 L409.0 501.4 L417.8 493.9 L422.2 483.8 L427.8 477.5 L437.9 473.8 L440.4 470.0M422.2 483.8 L420.3 493.9 L422.8 498.9 L431.6 496.4 L445.4 491.3 L451.1 485.7 L447.9 482.6 L435.4 482.6 L425.3 485.1M409.0 501.4 L416.5 503.9 L420.3 508.9 L415.3 516.5 L412.1 522.7 L415.3 535.3 L421.6 537.8 L419.1 547.8 L420.3 551.6M422.8 498.9 L426.6 503.9 L428.5 511.4 L426.6 517.7 L428.5 524.0 L435.4 520.2 L440.4 522.7 L446.7 530.3 L449.2 537.8 L454.2 536.5 L459.2 529.0 L461.7 522.7 L456.7 517.7 L449.2 513.9 L442.3 509.5 L428.5 511.4M442.3 509.5 L450.4 507.7 L463.0 510.2 L475.5 511.4 L488.1 508.9 L494.4 513.9 L492.5 520.2 L480.6 519.0 L470.5 519.6 L461.7 522.7M468.0 470.0 L469.3 480.0 L467.4 483.8 L472.4 492.6 L471.8 498.2 L454.2 497.0 L451.7 502.0 L454.2 505.2 L463.0 509.9M492.5 520.2 L499.4 529.0M470.5 519.6 L475.5 527.8 L489.4 537.8M454.2 536.5 L459.2 541.6 L461.7 545.3 L473.7 554.1M461.7 545.3 L458.0 554.1 L451.7 552.9 L449.2 547.8 L445.4 544.1 L449.2 537.8M428.5 524.0 L424.1 531.5 L427.8 537.8 L432.9 545.3 L437.9 547.8 L442.9 544.1 L440.4 539.1 L435.4 530.3 L430.4 526.5M421.6 537.8 L427.8 537.8M432.9 545.3 L437.9 555.4 L443.5 564.2 L450.4 566.7 L458.0 571.7M437.9 555.4 L442.9 550.4 L449.2 547.8M372.6 519.0 L381.4 529.0 L387.7 540.3 L396.5 547.8 L404.0 557.9 L410.3 562.9 L425.3 565.4 L429.1 562.9 L421.6 556.6 L420.3 551.6M377.0 522.7 L387.7 522.7 L392.7 529.0 L397.7 535.3 L406.5 540.3 L410.3 550.4 L415.3 556.6 L421.6 556.6M362.6 544.1 L376.4 540.9 L381.4 547.8 L386.4 555.4 L387.7 557.9 L380.1 562.9 L356.3 565.4M387.7 557.9 L400.2 556.6 L404.0 557.9M380.1 562.9 L386.4 569.2 L400.2 570.4 L402.7 562.9 L404.0 557.9M400.2 570.4 L410.3 571.7 L425.3 580.0M356.3 565.4 L358.8 580.0M371.3 573.0 L380.1 563.5M371.3 573.0 L372.6 580.0M386.4 569.2 L383.9 580.0"/>
<clipPath id="tc5"><rect x="290" y="580" width="200" height="110"/></clipPath>
<path clip-path="url(#tc5)" d="M333.9 580.0 L337.7 583.8 L345.2 585.6 L346.5 580.0M360.3 580.0 L360.3 588.8 L356.5 588.2 L352.8 590.0 L354.0 596.3 L364.1 608.9 L365.3 611.4 L371.6 615.2 L373.5 616.4M369.1 580.0 L367.8 587.5 L370.4 596.3 L372.9 598.8 L376.6 592.6 L384.2 590.7 L394.2 596.3 L396.7 603.9 L398.0 603.9M384.2 590.7 L386.7 580.0M398.0 580.0 L399.2 587.5 L396.7 595.1 L394.2 596.3M345.2 585.6 L344.0 591.3 L336.5 594.4M344.0 591.3 L346.5 596.3 L352.8 596.3M344.0 613.9 L352.8 612.6 L356.5 611.4 L360.3 613.9 L365.3 611.4M345.2 625.2 L350.3 621.4 L360.3 618.9 L364.1 622.7 L365.3 626.5M345.2 627.7 L352.8 632.7 L361.6 636.5 L364.1 639.0 L367.8 640.3M346.5 644.0 L355.3 644.0 L365.3 645.3M399.2 587.5 L410.5 592.6 L418.1 593.8 L420.6 590.0 L425.6 583.8 L441.9 591.9M425.6 583.8 L423.1 580.0M396.7 602.6 L403.0 602.6 L411.8 606.4 L420.6 605.1 L425.6 603.9 L429.4 608.9 L426.8 617.7 L424.3 621.4 L413.7 621.4M429.4 608.9 L433.1 610.1 L434.4 620.2M439.4 621.4 L440.7 616.4 L446.9 615.8"/>
</g>
<path d="M393.1 273.8 L397.5 276.9 L400.7 283.8 L400.0 291.3 L402.5 302.6 L403.2 311.4 L400.7 320.2 L402.5 330.3 L400.7 347.8 L394.4 356.6 L390.6 365.4 L385.6 369.2 L391.9 380.0 L398.1 386.3 L394.4 393.8 L400.7 400.7 L403.8 405.1 L415.0 408.9 L425.1 412.6 L430.1 426.5 L441.4 436.5 L445.2 442.8 L455.2 449.0 L451.5 454.0 L458.4 461.6 L460.3 466.6 L471.6 467.9 L480.4 472.9 L490.4 479.2 L495.6 481.3 L494.4 486.3 L498.1 495.1 L499.4 506.4 L504.4 518.3 L502.5 525.2 L453.2 580.0 L441.9 592.6 L446.9 613.9 L450.1 620.2 L450.1 631.5 L440.7 629.0 L439.4 621.4 L434.4 620.2 L431.9 626.5 L423.1 627.7 L413.7 630.2 L413.0 621.4 L405.5 616.4 L403.0 610.1 L398.0 603.9 L396.7 611.4 L394.2 617.7 L385.4 626.5 L384.2 630.2 L380.4 631.5 L376.6 621.4 L373.5 616.4 L372.9 623.9 L366.6 626.5 L367.8 640.3 L365.3 645.3 L365.3 654.1 L357.8 662.9 L344.0 666.6 L342.7 647.8 L346.5 634.0 L345.2 625.2 L345.2 617.7 L344.0 613.9 L333.9 606.4 L336.5 594.4 L331.4 597.6 L322.6 588.8 L312.6 585.0 L306.3 580.0 L300.6 574.8 L298.4 567.4 L293.2 564.5 L278.4 573.4 L253.1 580.0 L245.0 572.6 L236.8 573.4 L219.0 583.7 L205.7 591.9 L198.2 588.2 L187.9 579.3 L170.0 576.3 L169.4 575.0 L170.0 570.4 L172.6 562.9 L171.9 551.6 L176.3 545.3 L185.1 537.8 L215.2 537.2 L219.0 531.5 L224.0 522.7 L227.8 515.2 L230.9 507.7 L228.4 498.9 L229.7 486.3 L234.1 480.0 L247.9 476.9 L261.7 472.5 L262.6 472.9 L266.3 461.6 L277.0 454.1 L278.2 444.0 L283.3 435.2 L277.0 418.9 L273.9 408.2 L263.8 398.8 L251.9 388.8 L257.5 380.0 L267.6 371.7 L276.4 365.4 L287.7 367.3 L296.5 365.4 L304.0 356.6 L307.8 347.8 L315.3 342.8 L321.6 338.4 L320.3 334.0 L325.3 330.3 L336.6 324.0 L342.9 319.0 L343.5 313.3 L339.1 308.9 L332.9 305.8 L342.9 295.7 L350.4 291.3 L360.5 281.9 L370.5 281.3 L381.8 277.5 Z" fill="none" stroke="#fff" stroke-opacity=".95" stroke-width="2.400" stroke-linejoin="round"/>
</g>
</svg>
<div class="abs" style="left:532px;top:10px;width:31px;height:31px;border:2px solid rgba(0,0,0,.22);background:#eeeef1;border-radius:1px"></div>
<svg style="left:537.500px;top:15.700px" width="24" height="24" viewBox="0 0 24 24"><path fill="#003366" d="M17.650 6.350C16.200 4.900 14.210 4 12 4c-4.420 0-7.990 3.580-7.990 8s3.570 8 7.990 8c3.730 0 6.840-2.550 7.730-6h-2.080c-.82 2.330-3.040 4-5.650 4-3.310 0-6-2.690-6-6s2.690-6 6-6c1.660 0 3.140.69 4.220 1.780L13 11h7V4l-2.350 2.350z"/></svg>
<div class="abs" style="left:535px;top:331px;width:30px;height:60px;background:#f0f0f0;border-radius:3px;box-shadow:0 0 0 2px rgba(0,0,0,.2)"></div>
<div class="abs" style="left:535px;top:360.500px;width:30px;height:1px;background:#ccc"></div>
<div class="abs" style="left:5px;top:396px;width:47px;height:16.600px;border:2px solid #777;border-top:none;background:rgba(255,255,255,.8)"></div>
<div class="abs" style="left:354.800px;top:403.400px;width:222.200px;height:16.300px;background:rgba(255,255,255,.8)"></div>
</div>

<!-- selects -->
<svg style="left:48px;top:711px" width="24" height="24" viewBox="0 0 24 24"><path fill="#666" d="M12 2C8.130 2 5 5.130 5 9c0 5.250 7 13 7 13s7-7.750 7-13c0-3.870-3.130-7-7-7zm0 9.500c-1.380 0-2.500-1.120-2.500-2.500s1.120-2.500 2.500-2.500 2.500 1.120 2.500 2.500-1.120 2.500-2.500 2.500z"/></svg>
<svg style="left:48px;top:767.200px" width="24" height="24" viewBox="0 0 24 24"><path fill="#666" d="M12 2C8.130 2 5 5.130 5 9c0 5.250 7 13 7 13s7-7.750 7-13c0-3.870-3.130-7-7-7zm0 9.500c-1.380 0-2.500-1.120-2.500-2.500s1.120-2.500 2.500-2.500 2.500 1.120 2.500 2.500-1.120 2.500-2.500 2.500z"/></svg>
<svg style="left:48px;top:823px" width="24" height="24" viewBox="0 0 24 24"><path fill="#666" d="M12 2C8.130 2 5 5.130 5 9c0 5.250 7 13 7 13s7-7.750 7-13c0-3.870-3.130-7-7-7zm0 9.500c-1.380 0-2.500-1.120-2.500-2.500s1.120-2.500 2.500-2.500 2.500 1.120 2.500 2.500-1.120 2.500-2.500 2.500z"/></svg>
<svg style="left:601px;top:711px" width="24" height="24" viewBox="0 0 24 24"><path fill="#666" d="M7 10l5 5 5-5z"/></svg>
<svg style="left:601px;top:767px" width="24" height="24" viewBox="0 0 24 24"><path fill="#666" d="M7 10l5 5 5-5z"/></svg>
<svg style="left:601px;top:822.800px" width="24" height="24" viewBox="0 0 24 24"><path fill="#666" d="M7 10l5 5 5-5z"/></svg>
<div class="abs" style="left:48px;top:750px;width:577px;height:1px;background:#a9a9a9"></div>
<div class="abs" style="left:48px;top:806px;width:577px;height:1px;background:#a9a9a9"></div>
<div class="abs" style="left:48px;top:860.500px;width:577px;height:2.500px;background:#1a5e9a"></div>

<!-- green card -->
<div class="abs" style="left:676px;top:182.400px;width:1162px;height:390.200px;background:#6dc531;border-radius:4px"></div>
<svg style="left:682px;top:188.400px" width="1150" height="54.300"><defs><pattern id="hx" width="96" height="96" patternUnits="userSpaceOnUse"><rect width="96" height="96" fill="#6dc531"/><g stroke="#7d8187" fill="none"><path stroke-width="1.1" d="M-82.5 0L-178.5 96M13.5 0L-82.5 96M109.5 0L13.5 96M205.5 0L109.5 96M-66.7 0L-162.7 96M29.3 0L-66.7 96M125.3 0L29.3 96M221.3 0L125.3 96M-42.2 0L-138.2 96M53.8 0L-42.2 96M149.8 0L53.8 96M245.8 0L149.8 96M-21.5 0L-117.5 96M74.5 0L-21.5 96M170.5 0L74.5 96M266.5 0L170.5 96M-13.3 0L-109.3 96M82.7 0L-13.3 96M178.7 0L82.7 96M274.7 0L178.7 96M-156.9 0L-60.9 96M-60.9 0L35.1 96M35.1 0L131.1 96M131.1 0L227.1 96M-152.6 0L-56.6 96M-56.6 0L39.4 96M39.4 0L135.4 96M135.4 0L231.4 96"/><path stroke-width="1.3" d="M-95.1 0L-191.1 96M0.9 0L-95.1 96M96.9 0L0.9 96M192.9 0L96.9 96M-87.7 0L-183.7 96M8.3 0L-87.7 96M104.3 0L8.3 96M200.3 0L104.3 96M-79.8 0L-175.8 96M16.2 0L-79.8 96M112.2 0L16.2 96M208.2 0L112.2 96M-161.2 0L-65.2 96M-65.2 0L30.8 96M30.8 0L126.8 96M126.8 0L222.8 96M-144.3 0L-48.3 96M-48.3 0L47.7 96M47.7 0L143.7 96M143.7 0L239.7 96M-114.0 0L-18.0 96M-18.0 0L78.0 96M78.0 0L174.0 96M174.0 0L270.0 96"/><path stroke-width="1.5" d="M-36.8 0L-132.8 96M59.2 0L-36.8 96M155.2 0L59.2 96M251.2 0L155.2 96M-16.2 0L-112.2 96M79.8 0L-16.2 96M175.8 0L79.8 96M271.8 0L175.8 96M-186.7 0L-90.7 96M-90.7 0L5.3 96M5.3 0L101.3 96M101.3 0L197.3 96"/><path stroke-width="1.8" d="M-91.2 0L-187.2 96M4.8 0L-91.2 96M100.8 0L4.8 96M196.8 0L100.8 96M-72.2 0L-168.2 96M23.8 0L-72.2 96M119.8 0L23.8 96M215.8 0L119.8 96M-62.5 0L-158.5 96M33.5 0L-62.5 96M129.5 0L33.5 96M225.5 0L129.5 96M-57.8 0L-153.8 96M38.2 0L-57.8 96M134.2 0L38.2 96M230.2 0L134.2 96M-49.0 0L-145.0 96M47.0 0L-49.0 96M143.0 0L47.0 96M239.0 0L143.0 96M-45.5 0L-141.5 96M50.5 0L-45.5 96M146.5 0L50.5 96M242.5 0L146.5 96M-31.8 0L-127.8 96M64.2 0L-31.8 96M160.2 0L64.2 96M256.2 0L160.2 96M-27.1 0L-123.1 96M68.9 0L-27.1 96M164.9 0L68.9 96M260.9 0L164.9 96M-1.4 0L-97.4 96M94.6 0L-1.4 96M190.6 0L94.6 96M286.6 0L190.6 96M-178.8 0L-82.8 96M-82.8 0L13.2 96M13.2 0L109.2 96M109.2 0L205.2 96M-126.2 0L-30.2 96M-30.2 0L65.8 96M65.8 0L161.8 96M161.8 0L257.8 96M-117.5 0L-21.5 96M-21.5 0L74.5 96M74.5 0L170.5 96M170.5 0L266.5 96"/><path stroke-width="2.0" d="M-76.2 0L-172.2 96M19.8 0L-76.2 96M115.8 0L19.8 96M211.8 0L115.8 96M-53.0 0L-149.0 96M43.0 0L-53.0 96M139.0 0L43.0 96M235.0 0L139.0 96M-9.0 0L-105.0 96M87.0 0L-9.0 96M183.0 0L87.0 96M279.0 0L183.0 96M-172.6 0L-76.6 96M-76.6 0L19.4 96M19.4 0L115.4 96M115.4 0L211.4 96M-168.5 0L-72.5 96M-72.5 0L23.5 96M23.5 0L119.5 96M119.5 0L215.5 96M-137.0 0L-41.0 96M-41.0 0L55.0 96M55.0 0L151.0 96M151.0 0L247.0 96M-121.9 0L-25.9 96M-25.9 0L70.1 96M70.1 0L166.1 96M166.1 0L262.1 96M-106.7 0L-10.7 96M-10.7 0L85.3 96M85.3 0L181.3 96M181.3 0L277.3 96M-102.9 0L-6.9 96M-6.9 0L89.1 96M89.1 0L185.1 96M185.1 0L281.1 96"/><path stroke-width="2.3" d="M-190.4 0L-94.4 96M-94.4 0L1.6 96M1.6 0L97.6 96M97.6 0L193.6 96M-182.7 0L-86.7 96M-86.7 0L9.3 96M9.3 0L105.3 96M105.3 0L201.3 96M-148.1 0L-52.1 96M-52.1 0L43.9 96M43.9 0L139.9 96M139.9 0L235.9 96M-131.8 0L-35.8 96M-35.8 0L60.2 96M60.2 0L156.2 96M156.2 0L252.2 96"/></g></pattern></defs><rect width="1150" height="54.300" fill="url(#hx)"/></svg>
<div class="abs" style="left:696px;top:195.300px;width:379px;height:40.200px;background:#6dc531;border-radius:4px;opacity:.96"></div>
<svg style="left:1035px;top:204.500px" width="24" height="24" viewBox="0 0 24 24"><path fill="#1f3d1a" d="M11 7h2v2h-2zm0 4h2v6h-2zm1-9C6.480 2 2 6.480 2 12s4.480 10 10 10 10-4.480 10-10S17.520 2 12 2zm0 18c-4.410 0-8-3.590-8-8s3.590-8 8-8 8 3.590 8 8-3.590 8-8 8z"/></svg>
<div class="abs" style="left:682px;top:242.700px;width:1150px;height:284.300px;background:#fff"></div>
<!-- bar -->
<div class="abs" style="left:1045px;top:332px;width:424.500px;height:40px;border-radius:3px;overflow:hidden;background:#3f88cf"><div style="width:195px;height:40px;background:#8ab342"></div></div>
<!-- row lines -->
<div class="abs" style="left:684px;top:395px;width:343px;height:1px;background:#dfe1e4"></div>
<div class="abs" style="left:1029px;top:395px;width:454px;height:1px;background:#dfe1e4"></div>
<div class="abs" style="left:1486px;top:395px;width:344px;height:1px;background:#dfe1e4"></div>
<div class="abs" style="left:684px;top:450px;width:343px;height:1px;background:#dfe1e4"></div>
<div class="abs" style="left:1029px;top:450px;width:454px;height:1px;background:#dfe1e4"></div>
<div class="abs" style="left:1486px;top:450px;width:344px;height:1px;background:#dfe1e4"></div>

<span class="t" id="eligendo" style="left:144.89px;top:18.70px;font-size:53.5px;color:#fff;font-weight:700;transform:scaleX(0.8702);">Eligendo</span>
<span class="t" id="title" style="left:389.97px;top:40.43px;font-size:24px;color:#fff;font-weight:400;transform:scaleX(1.0321);">Referendum costituzionale e Suppletive Camera 22-23 marzo 2026</span>
<span class="t" id="live" style="left:52.74px;top:97.44px;font-size:17.2px;color:#ea0a0a;font-weight:700;transform:scaleX(0.9608);-webkit-text-stroke:0.4px #ea0a0a;">LIVE</span>
<span class="t" id="nav1" style="left:157.00px;top:97.18px;font-size:17.5px;color:#1a1a1a;font-weight:400;transform:scaleX(1.0603);">Affluenza e risultati</span>
<span class="t" id="nav2" style="left:344.93px;top:97.18px;font-size:17.5px;color:#444;font-weight:400;transform:scaleX(1.0660);">Monitoraggio</span>
<span class="t" id="nav3" style="left:484.46px;top:97.18px;font-size:17.5px;color:#444;font-weight:400;transform:scaleX(1.0417);">Reportistica</span>
<span class="t" id="nav4" style="left:614.50px;top:97.18px;font-size:17.5px;color:#444;font-weight:400;transform:scaleX(0.9474);">Guida</span>
<span class="t" id="cerca" style="left:96.00px;top:176.53px;font-size:16.5px;color:#5c5c5c;font-weight:400;transform:scaleX(0.8939);">Cerca ente</span>
<span class="t" id="chip1" style="left:48.50px;top:235.15px;font-size:14px;color:#17324d;font-weight:400;transform:scaleX(0.8675);">ARIZZANO</span>
<span class="t" id="chip2" style="left:117.50px;top:235.15px;font-size:14px;color:#17324d;font-weight:400;transform:scaleX(0.8732);">VERBANO-CUSIO-OSSOLA</span>
<span class="t" id="chip3" style="left:281.60px;top:235.15px;font-size:14px;color:#17324d;font-weight:400;transform:scaleX(0.8985);">PIEMONTE</span>
<span class="t" id="l1" style="left:84.20px;top:707.38px;font-size:11.6px;color:#5a5a5a;font-weight:400;transform:scaleX(0.9613);">Regione</span>
<span class="t" id="v1" style="left:83.26px;top:724.38px;font-size:13.6px;color:#222;font-weight:400;transform:scaleX(0.9380);">PIEMONTE</span>
<span class="t" id="l2" style="left:84.20px;top:763.18px;font-size:11.6px;color:#5a5a5a;font-weight:400;transform:scaleX(0.9681);">Provincia</span>
<span class="t" id="v2" style="left:84.20px;top:780.38px;font-size:13.6px;color:#222;font-weight:400;transform:scaleX(0.9120);">VERBANO-CUSIO-OSSOLA</span>
<span class="t" id="l3" style="left:84.20px;top:819.18px;font-size:11.6px;color:#2a7bc0;font-weight:400;transform:scaleX(0.9682);">Comune</span>
<span class="t" id="v3" style="left:84.20px;top:836.68px;font-size:13.6px;color:#222;font-weight:400;transform:scaleX(0.9243);">ARIZZANO</span>
<span class="t" id="norme" style="left:711.19px;top:207.17px;font-size:20px;color:#1f3d1a;font-weight:400;transform:scaleX(1.0126);-webkit-text-stroke:0.55px #1f3d1a;">Norme ordinamento giurisdizionale</span>
<span class="t" id="sez" style="left:1208.00px;top:265.57px;font-size:13.5px;color:#111;font-weight:400;transform:scaleX(1.0677);"><b>Sezioni:</b> 2 su 2</span>
<span class="t" id="si" style="left:830.50px;top:310.01px;font-size:64px;color:#003366;font-weight:400;transform:scaleX(0.8503);">SI</span>
<span class="t" id="no" style="left:1614.41px;top:310.01px;font-size:64px;color:#003366;font-weight:400;transform:scaleX(0.9182);">NO</span>
<span class="t" id="n1" style="left:833.45px;top:413.33px;font-size:25px;color:#17375e;font-weight:400;transform:scaleX(1.0549);">505</span>
<span class="t" id="n2" style="left:1636.97px;top:413.33px;font-size:25px;color:#17375e;font-weight:400;transform:scaleX(1.0298);">571</span>
<span class="t" id="p1" style="left:798.00px;top:474.37px;font-size:35px;color:#003366;font-weight:400;transform:scaleX(0.9779);">46,93%</span>
<span class="t" id="p2" style="left:1601.01px;top:474.37px;font-size:35px;color:#003366;font-weight:400;transform:scaleX(0.9863);">53,07%</span>
<span class="t" id="foot" style="left:691.77px;top:542.30px;font-size:15px;color:#16260f;font-weight:400;transform:scaleX(0.9798);"><b>Elettori:</b> 1.636 | <b>Votanti:</b> 1.080 (66,01%) | <b>Schede nulle:</b> 3 - <b>Schede bianche:</b> 1 - <b>Schede contestate:</b> 0 | <b>Aggiornamento:</b> 23/03/2026 - 16:08</span>
<span class="t" id="km" style="left:63.00px;top:668.86px;font-size:11.5px;color:#333;font-weight:400;transform:scaleX(1.0244);">10 km</span>
<span class="t" id="attr" style="left:411.60px;top:674.78px;font-size:11.6px;color:#333;font-weight:400;transform:scaleX(1.0293);">Leaflet | &copy; OpenStreetMap contributors</span>
<span class="t" id="zplus" style="left:592.00px;top:606.17px;font-size:22px;color:#222;font-weight:700;transform:scaleX(1.0656);">+</span>
<span class="t" id="zminus" style="left:592.80px;top:635.07px;font-size:22px;color:#222;font-weight:700;transform:scaleX(1.0240);">&minus;</span>
</div>
</body>
</html>
